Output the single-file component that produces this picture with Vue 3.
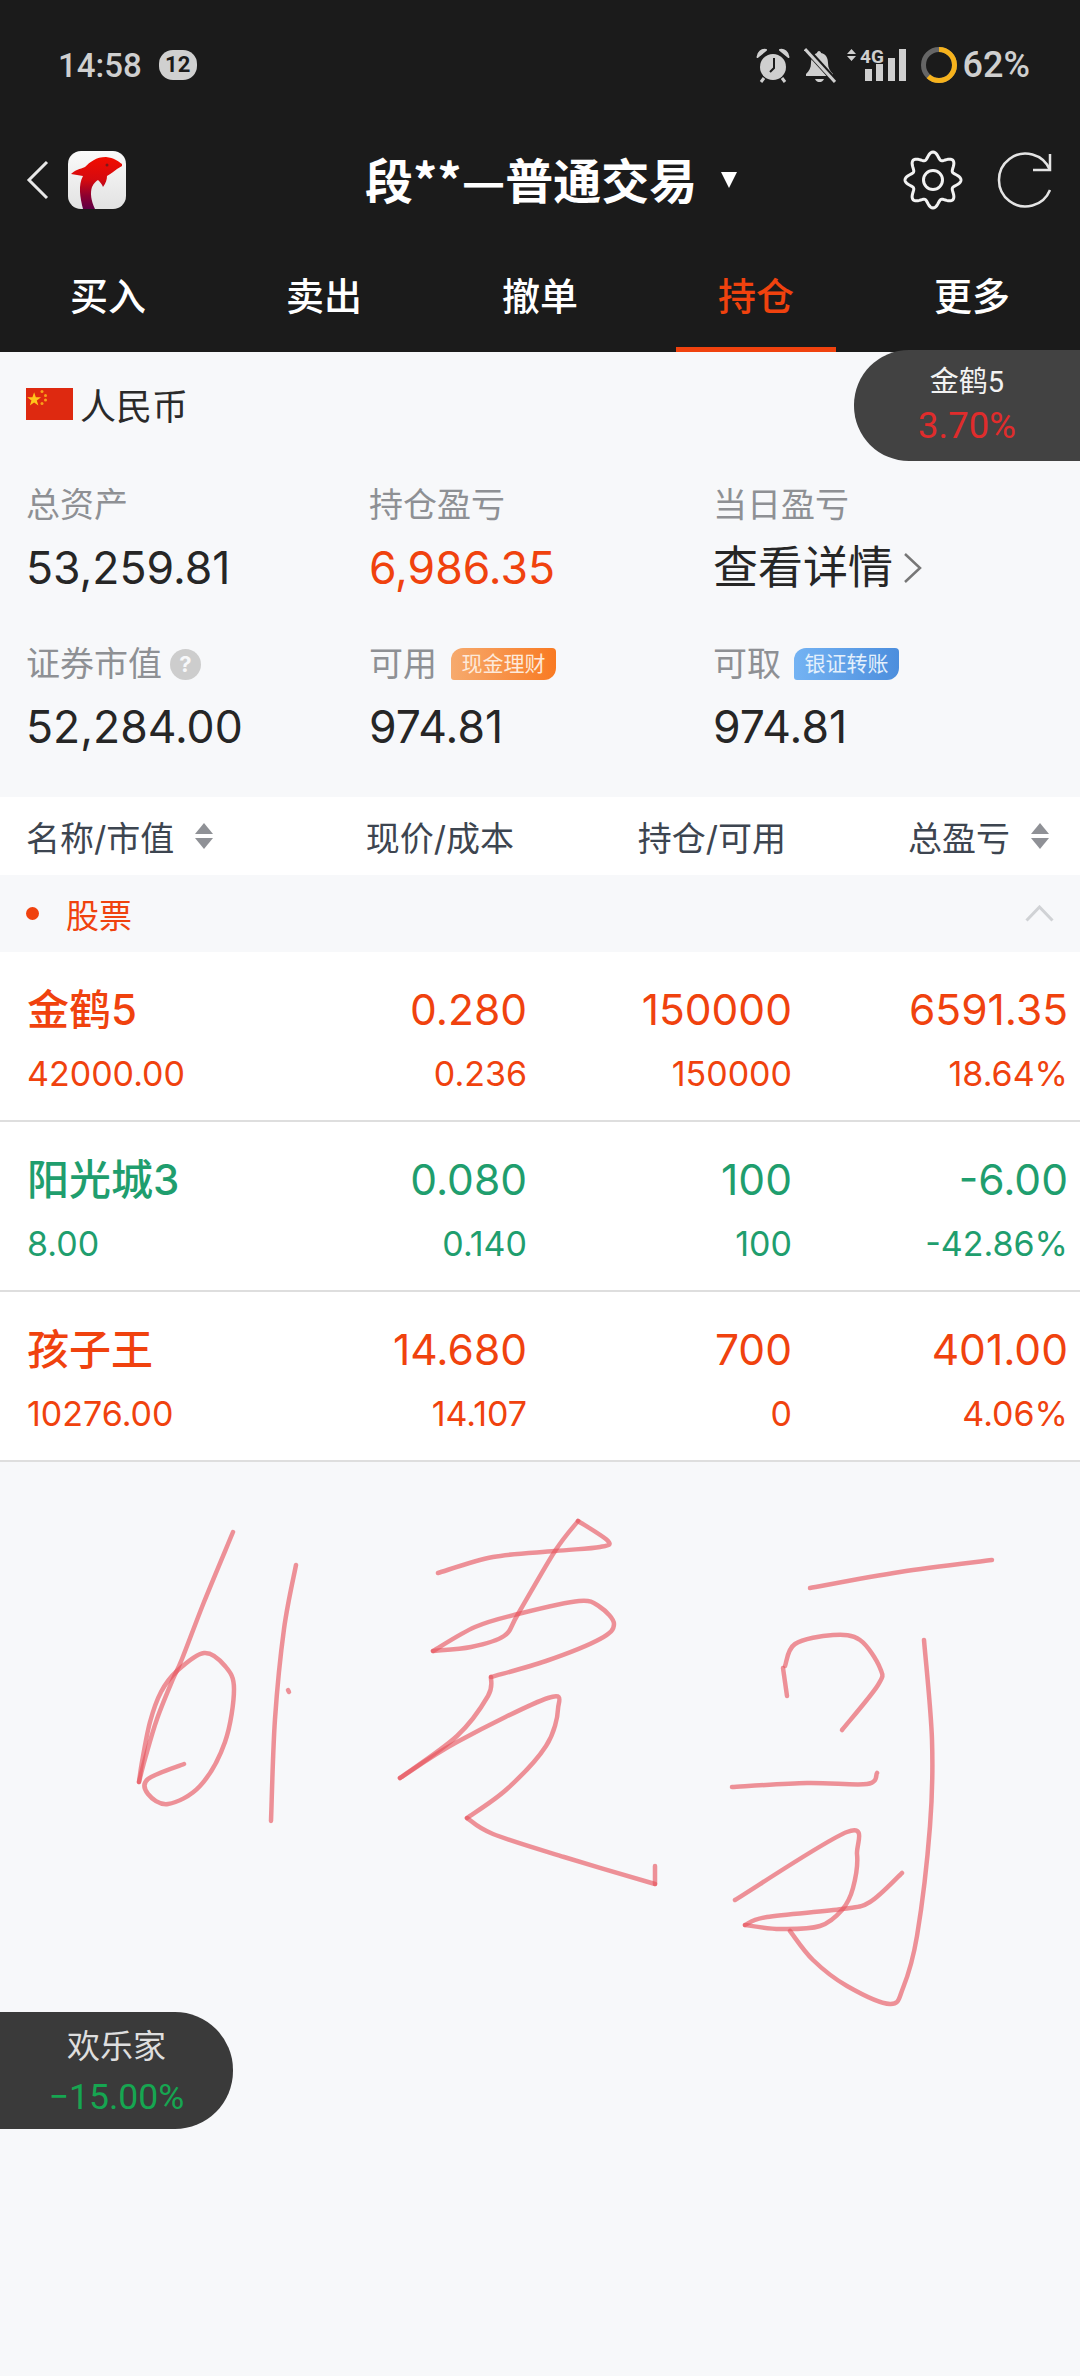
<script setup>
const tabs = ['买入', '卖出', '撤单', '持仓', '更多']

const rows = [
  { name: '金鹤5', value: '42000.00', price: '0.280', cost: '0.236', hold: '150000', free: '150000', pl: '6591.35', pct: '18.64%', up: true },
  { name: '阳光城3', value: '8.00', price: '0.080', cost: '0.140', hold: '100', free: '100', pl: '-6.00', pct: '-42.86%', up: false },
  { name: '孩子王', value: '10276.00', price: '14.680', cost: '14.107', hold: '700', free: '0', pl: '401.00', pct: '4.06%', up: true },
]

// flower outline of the settings icon
const gear = (() => {
  let d = ''
  for (let i = 0; i < 160; i++) {
    const a = (i / 160) * Math.PI * 2 - Math.PI / 2
    const r = 24.5 + 3.5 * Math.cos(8 * (a + Math.PI / 2))
    d += (i ? 'L' : 'M') + (30 + r * Math.cos(a)).toFixed(2) + ' ' + (30 + r * Math.sin(a)).toFixed(2)
  }
  return d + 'Z'
})()

// pen strokes, split at the sharp corners
const strokes = [
  [[233, 1533], [204, 1603], [182, 1660], [173, 1680], [157, 1720], [145, 1760], [139, 1783]],
  [[139, 1783], [142, 1763], [150, 1723], [161, 1693], [177, 1672], [204, 1654], [225, 1667], [234, 1690], [225, 1743], [200, 1787], [168, 1805], [148, 1795], [148, 1780], [184, 1765]],
  [[296, 1566], [284, 1630], [275, 1720], [271, 1822]],
  [[288, 1691], [289, 1693]],
  [[438, 1574], [493, 1558], [555, 1552], [600, 1548], [608, 1542], [578, 1522]],
  [[578, 1522], [555, 1552], [518, 1615], [504, 1637], [471, 1648], [433, 1652]],
  [[433, 1652], [475, 1628], [518, 1615], [579, 1602], [600, 1608], [614, 1625], [600, 1640], [546, 1662], [491, 1678]],
  [[491, 1678], [488, 1697], [457, 1737], [400, 1779]],
  [[400, 1779], [457, 1743], [548, 1699], [558, 1710], [546, 1747], [507, 1790], [467, 1819]],
  [[467, 1819], [493, 1835], [564, 1858], [655, 1885]],
  [[655, 1885], [655, 1867]],
  [[810, 1589], [900, 1573], [992, 1561]],
  [[787, 1697], [783, 1669]],
  [[785, 1667], [795, 1645], [833, 1636], [860, 1641], [880, 1669], [878, 1686], [842, 1731]],
  [[732, 1788], [807, 1784], [867, 1785], [877, 1774]],
  [[735, 1901], [847, 1833], [857, 1855], [853, 1889], [842, 1911], [820, 1927], [780, 1930], [745, 1926]],
  [[745, 1926], [767, 1918], [842, 1910], [870, 1903], [902, 1874]],
  [[924, 1641], [932, 1741], [930, 1827], [917, 1937], [903, 1989], [890, 2005], [847, 1987], [813, 1961], [790, 1932]],
]

const smooth = (pts) => {
  let d = `M${pts[0][0]} ${pts[0][1]}`
  for (let i = 0; i < pts.length - 1; i++) {
    const p0 = pts[i - 1] || pts[i]
    const p1 = pts[i]
    const p2 = pts[i + 1]
    const p3 = pts[i + 2] || p2
    const c1 = [p1[0] + (p2[0] - p0[0]) / 6, p1[1] + (p2[1] - p0[1]) / 6]
    const c2 = [p2[0] - (p3[0] - p1[0]) / 6, p2[1] - (p3[1] - p1[1]) / 6]
    d += `C${c1[0].toFixed(1)} ${c1[1].toFixed(1)} ${c2[0].toFixed(1)} ${c2[1].toFixed(1)} ${p2[0]} ${p2[1]}`
  }
  return d
}
const inkPaths = strokes.map(smooth)
</script>

<template>
  <div class="page">
    <header class="top">
      <div class="status">
        <span class="time">14:58</span>
        <span class="count">12</span>
        <div class="status-right">
          <svg width="34" height="36" viewBox="0 0 34 36">
            <circle cx="17" cy="20" r="13" fill="#cfcfcf" />
            <path d="M1.5 10C2 5 6 2 10 3L1.5 10ZM32.5 10C32 5 28 2 24 3L32.500 10Z" fill="#cfcfcf" stroke="#cfcfcf" stroke-width="2" stroke-linejoin="round" />
            <path d="M8 31l-3 4M26 31l3 4" stroke="#cfcfcf" stroke-width="3" />
            <path d="M18 11v10l-4 4" fill="none" stroke="#1b1b1b" stroke-width="2" />
          </svg>
          <svg class="bell" width="32" height="36" viewBox="0 0 32 36">
            <path d="M15 4c1 0 2 1 2 2 5 1 7 5 7 10 0 5 2 8 5 11v2H2v-2c3-3 5-6 5-11 0-5 3-9 6-10 0-1 1-2 2-2z" fill="#cfcfcf" />
            <path d="M11 32h9c-1 2.500-3 3-4.500 3s-3.500-.5-4.500-3z" fill="#cfcfcf" />
            <path d="M1 1l30 33" stroke="#1b1b1b" stroke-width="6" />
            <path d="M1 2l30 33" stroke="#cfcfcf" stroke-width="3" />
          </svg>
          <svg class="signal" width="60" height="48" viewBox="0 -12 60 48">
            <path d="M0 7l4.500-5 4.500 5zM0 9h9l-4.500 5z" fill="#cfcfcf" />
            <text x="13" y="16" class="net">4G</text>
            <rect x="18" y="22" width="7" height="12" fill="#cfcfcf" />
            <rect x="29" y="17" width="7" height="17" fill="#cfcfcf" />
            <rect x="41" y="11" width="7" height="23" fill="#cfcfcf" />
            <rect x="52" y="2" width="7" height="32" fill="#cfcfcf" />
          </svg>
          <svg class="ring" width="36" height="36" viewBox="0 0 36 36">
            <circle cx="18" cy="18" r="15.500" fill="none" stroke="#666" stroke-width="5" />
            <circle cx="18" cy="18" r="15.500" fill="none" stroke="#f6b21c" stroke-width="5" pathLength="100" stroke-dasharray="62 38" transform="rotate(-90 18 18)" />
          </svg>
          <span class="battery">62%</span>
        </div>
      </div>

      <div class="nav">
        <svg width="23" height="40" viewBox="0 0 23 40">
          <path d="M21 2L3 20l18 18" fill="none" stroke="#e8e8e8" stroke-width="3" />
        </svg>
        <div class="logo">
          <svg width="58" height="58" viewBox="0 0 58 58">
            <defs>
              <linearGradient id="fish" x1="0" y1="0" x2="0" y2="1">
                <stop offset="0" stop-color="#f20d00" />
                <stop offset="0.45" stop-color="#d40a10" />
                <stop offset="0.75" stop-color="#8c0030" />
                <stop offset="1" stop-color="#5f0045" />
              </linearGradient>
            </defs>
            <path d="M54 13C50 10 46 7 38 6C28 6 22 11 17 16C12 18 7 19 3 23C7 24 11 24 15 25C10 34 12 46 15 58L27 58C23 50 22 42 24 36C26 32 28 30 30 29C32 31 34 33 35 36C38 32 39 28 39 25C43 23 46 20 49 18L54 15Z" fill="url(#fish)" />
            <circle cx="39" cy="14" r="1.500" fill="#7a1a1a" />
          </svg>
        </div>
        <h1 class="title">段**—普通交易</h1>
        <span class="caret"></span>
        <div class="nav-actions">
          <svg width="60" height="60" viewBox="0 0 60 60">
            <path :d="gear" fill="none" stroke="#f2f2f2" stroke-width="3" />
            <circle cx="30" cy="30" r="9.500" fill="none" stroke="#f2f2f2" stroke-width="3" />
          </svg>
          <svg width="58" height="60" viewBox="0 0 58 60">
            <path d="M54 20A26.500 26.500 0 1 0 54 40" fill="none" stroke="#e4e4e4" stroke-width="2.500" />
            <path d="M54 4V20H37" fill="none" stroke="#e4e4e4" stroke-width="2.500" />
          </svg>
        </div>
      </div>

      <nav class="tabs">
        <div v-for="t in tabs" :key="t" class="tab" :class="{ active: t === '持仓' }">{{ t }}</div>
      </nav>
    </header>

    <section class="summary">
      <div class="currency">
        <svg width="47" height="32" viewBox="0 0 47 32">
          <rect width="47" height="32" fill="#de2910" />
          <path d="M7.500 3.500l1.800 5.300h5.500l-4.500 3.300 1.700 5.300-4.500-3.300-4.500 3.300 1.700-5.300L.2 8.800h5.500z" transform="translate(1 1) scale(.95)" fill="#ffc61a" />
          <circle cx="16" cy="3.500" r="1.500" fill="#f9a01a" />
          <circle cx="19.500" cy="7.500" r="1.500" fill="#f9a01a" />
          <circle cx="19.500" cy="12" r="1.500" fill="#f9a01a" />
          <circle cx="16" cy="15.500" r="1.500" fill="#f9a01a" />
        </svg>
        <span>人民币</span>
      </div>
      <div class="stats">
        <div class="stat">
          <div class="label">总资产</div>
          <div class="num">53,259.81</div>
        </div>
        <div class="stat">
          <div class="label">持仓盈亏</div>
          <div class="num up">6,986.35</div>
        </div>
        <div class="stat">
          <div class="label">当日盈亏</div>
          <div class="detail">
            查看详情
            <svg width="20" height="32" viewBox="0 0 20 32">
              <path d="M2 2l15 14L2 30" fill="none" stroke="#777" stroke-width="2.500" />
            </svg>
          </div>
        </div>
        <div class="stat">
          <div class="label">证券市值<span class="help">?</span></div>
          <div class="num">52,284.00</div>
        </div>
        <div class="stat">
          <div class="label">可用<span class="tag orange">现金理财</span></div>
          <div class="num">974.81</div>
        </div>
        <div class="stat">
          <div class="label">可取<span class="tag blue">银证转账</span></div>
          <div class="num">974.81</div>
        </div>
      </div>
    </section>

    <div class="table-head">
      <div class="th first">名称/市值<i class="sort"></i></div>
      <div class="th second">现价/成本</div>
      <div class="th third">持仓/可用</div>
      <div class="th fourth">总盈亏<i class="sort"></i></div>
    </div>

    <div class="group">
      <i class="dot"></i>
      <span>股票</span>
      <svg width="29" height="17" viewBox="0 0 29 17">
        <path d="M1.500 15.500L14.500 2l13 13.500" fill="none" stroke="#d0d2d5" stroke-width="3" />
      </svg>
    </div>

    <div v-for="r in rows" :key="r.name" class="row" :class="r.up ? 'up' : 'down'">
      <div>
        <div class="name">{{ r.name }}</div>
        <div class="sub">{{ r.value }}</div>
      </div>
      <div class="cell">
        <div class="big">{{ r.price }}</div>
        <div class="sub">{{ r.cost }}</div>
      </div>
      <div class="cell">
        <div class="big">{{ r.hold }}</div>
        <div class="sub">{{ r.free }}</div>
      </div>
      <div class="cell">
        <div class="big">{{ r.pl }}</div>
        <div class="sub">{{ r.pct }}</div>
      </div>
    </div>

    <div class="canvas">
      <svg width="1080" height="913" viewBox="0 1463 1080 913">
        <path v-for="(d, i) in inkPaths" :key="i" :d="d" class="ink" />
      </svg>
    </div>

    <div class="float right">
      <div class="float-name">金鹤5</div>
      <div class="float-pct red">3.70%</div>
    </div>
    <div class="float left">
      <div class="float-name">欢乐家</div>
      <div class="float-pct green">−15.00%</div>
    </div>
  </div>
</template>

<style>
body { margin: 0; background: #f7f8fa; }
</style>

<style scoped>
.page {
  position: relative; width: 1080px; height: 2376px; overflow: hidden;
  display: flex; flex-direction: column;
  background: #f7f8fa; color: #262626;
  font-family: Inter, "Noto Sans CJK SC", sans-serif;
}

.top { background: #1b1b1b; height: 352px; flex: none; font-family: Roboto, "Noto Sans CJK SC", sans-serif; }
.status { height: 130px; padding: 0 50px 0 58px; display: flex; align-items: center; color: #cfcfcf; box-sizing: border-box; }
.time { font-size: 33px; font-weight: 500; }
.count { margin-left: 17px; width: 38px; height: 30px; border-radius: 14px; background: #d0d0d0; color: #1b1b1b; font-size: 22px; font-weight: 700; line-height: 30px; text-align: center; }
.status-right { margin-left: auto; display: flex; align-items: center; }
.bell { margin-left: 14px; }
.signal { margin-left: 11px; margin-top: -12px; }
.ring { margin-left: 14px; }
.battery { margin-left: 6px; font-size: 36px; font-weight: 500; }
.net { font-size: 19px; font-weight: 700; fill: #cfcfcf; font-family: Roboto, sans-serif; }

.nav { height: 100px; padding-left: 26px; display: flex; align-items: center; color: #fff; }
.logo { margin-left: 19px; width: 58px; height: 58px; border-radius: 13px; overflow: hidden; background: linear-gradient(#fafafa, #e2e2e2); }
.logo svg { display: block; }
.title { margin: 0 0 5px 239px; font-family: "Noto Sans CJK SC", sans-serif; font-size: 48px; font-weight: 700; line-height: 60px; white-space: nowrap; }
.caret { margin-left: 24px; border-left: 8px solid transparent; border-right: 8px solid transparent; border-top: 16px solid #fff; }
.nav-actions { margin-left: auto; padding-right: 26px; display: flex; align-items: center; gap: 33px; }

.tabs { height: 122px; display: grid; grid-template-columns: repeat(5, 216px); }
.tab { height: 122px; box-sizing: border-box; padding-top: 13px; line-height: 108px; text-align: center; color: #fff; font-size: 38px; font-weight: 500; position: relative; }
.tab.active { color: #f0420e; }
.tab.active::after { content: ''; position: absolute; left: 28px; right: 28px; bottom: 0; height: 5px; background: #f0420e; }

.summary { height: 445px; flex: none; box-sizing: border-box; padding: 30px 0 0 26px; }
.currency { height: 44px; display: flex; align-items: center; gap: 7px; font-size: 36px; margin-bottom: 57px; color: #2a2a2a; }
.stats { display: grid; grid-template-columns: 343px 344px 1fr; row-gap: 44px; }
.label { height: 44px; line-height: 44px; display: flex; align-items: center; font-size: 34px; color: #8e9094; }
.num { margin-top: 11px; height: 60px; line-height: 60px; font-size: 44.500px; }
.num.up { color: #f0420e; }
.detail { margin-top: 11px; height: 60px; line-height: 60px; font-size: 45px; display: flex; align-items: center; gap: 10px; }
.help { margin-left: 8px; width: 31px; height: 31px; border-radius: 50%; background: #cdcdcd; color: #f7f8fa; font-size: 22px; font-weight: 700; line-height: 31px; text-align: center; }
.tag { margin-left: 14px; width: 105px; height: 32px; line-height: 32px; text-align: center; color: #fde9da; font-size: 21px; border-radius: 12px 4px 12px 3px; }
.tag.orange { background: linear-gradient(90deg, #f6aa6e, #f97a22); }
.tag.blue { background: linear-gradient(90deg, #74b3f3, #4c8edd); color: #e4f0fc; margin-left: 13px; }

.table-head, .row { display: grid; grid-template-columns: 241px 259px 265px 276px; padding: 0 12px 0 27px; }
.table-head { height: 78px; flex: none; align-items: center; background: #fff; font-size: 34px; color: #3d4550; padding-left: 26px; }
.th { display: flex; align-items: center; justify-content: flex-end; white-space: nowrap; }
.th.first { justify-content: flex-start; }
.th.second { padding-right: 12px; }
.th.third { padding-right: 5px; }
.th.fourth { padding-right: 18px; }
.sort { position: relative; margin-left: 21px; width: 18px; height: 26px; }
.sort::before, .sort::after { content: ''; position: absolute; left: 0; border-left: 9px solid transparent; border-right: 9px solid transparent; }
.sort::before { top: 0; border-bottom: 11px solid #8f9196; }
.sort::after { bottom: 0; border-top: 11px solid #8f9196; }

.group { height: 77px; flex: none; display: flex; align-items: center; padding: 0 26px 0 26px; font-size: 33px; color: #f0420e; }
.dot { width: 13px; height: 13px; border-radius: 50%; background: #f0420e; margin-right: 27px; }
.group svg { margin-left: auto; }

.row { height: 170px; flex: none; box-sizing: border-box; background: #fff; border-bottom: 2px solid #dedede; padding-top: 33px; }
.row.up { color: #f0420e; }
.row.down { color: #1f9e6e; }
.name { height: 50px; line-height: 50px; font-size: 42px; font-weight: 500; white-space: nowrap; }
.big { height: 50px; line-height: 50px; font-size: 42.500px; }
.sub { margin-top: 17px; height: 44px; line-height: 44px; font-size: 34px; }
.cell { text-align: right; }

.canvas { flex: 1; }
.canvas svg { display: block; }
.ink { fill: none; stroke: #e6505a; stroke-opacity: .62; stroke-width: 4.500; stroke-linecap: round; stroke-linejoin: round; }

.float { position: absolute; height: 111px; text-align: center; box-sizing: border-box; font-family: Roboto, "Noto Sans CJK SC", sans-serif; }
.float.right { top: 350px; right: 0; width: 226px; border-radius: 55px 0 0 55px; background: #424242; }
.float.left { top: 2012px; left: 0; width: 233px; height: 117px; border-radius: 0 58px 58px 0; background: #3a3a3a; }
.float-name { height: 44px; line-height: 44px; font-size: 29px; color: #f2f2f2; margin-top: 10px; }
.float.left .float-name { margin-top: 13px; font-size: 33px; color: #dedede; }
.float-pct { font-size: 36.500px; line-height: 44px; }
.float.left .float-pct { margin-top: 6px; font-size: 35.500px; }
.red { color: #e02c2c; }
.green { color: #16a651; }
</style>
